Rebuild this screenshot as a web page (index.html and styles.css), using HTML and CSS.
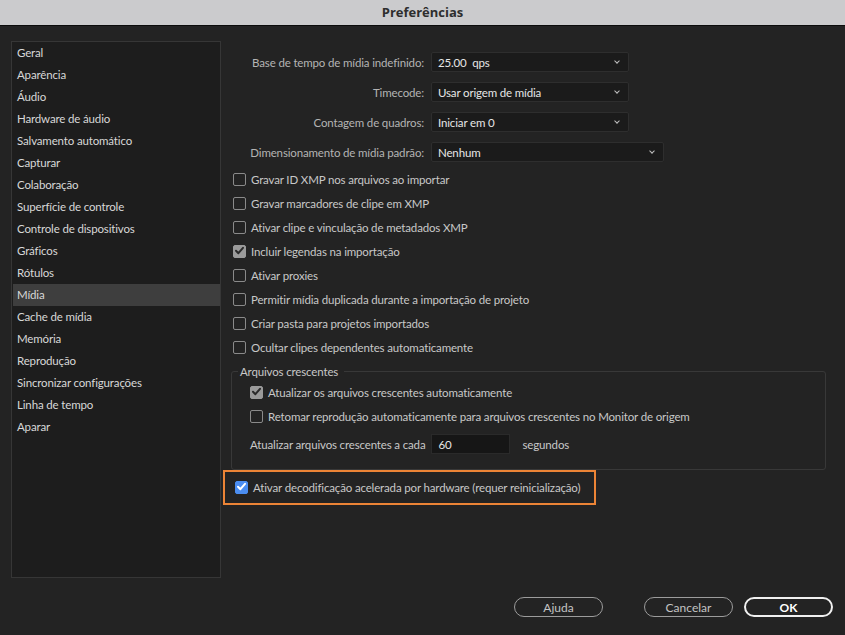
FILE: index.html
```html
<!DOCTYPE html>
<html lang="pt">
<head>
<meta charset="utf-8">
<title>Preferências</title>
<link rel="stylesheet" href="styles.css">
</head>
<body>
<div class="window">
  <div class="titlebar">Preferências</div>
  <div class="main">
    <ul class="sidebar">
      <li>Geral</li>
      <li>Aparência</li>
      <li>Áudio</li>
      <li>Hardware de áudio</li>
      <li>Salvamento automático</li>
      <li>Capturar</li>
      <li>Colaboração</li>
      <li>Superfície de controle</li>
      <li>Controle de dispositivos</li>
      <li>Gráficos</li>
      <li>Rótulos</li>
      <li class="selected">Mídia</li>
      <li>Cache de mídia</li>
      <li>Memória</li>
      <li>Reprodução</li>
      <li>Sincronizar configurações</li>
      <li>Linha de tempo</li>
      <li>Aparar</li>
    </ul>
    <div class="panel">
      <div class="form">
        <label class="flabel">Base de tempo de mídia indefinido:</label>
        <div class="select">25.00&nbsp; qps<span class="chev"></span></div>
        <label class="flabel">Timecode:</label>
        <div class="select">Usar origem de mídia<span class="chev"></span></div>
        <label class="flabel">Contagem de quadros:</label>
        <div class="select">Iniciar em 0<span class="chev"></span></div>
        <label class="flabel">Dimensionamento de mídia padrão:</label>
        <div class="select wide">Nenhum<span class="chev"></span></div>
      </div>
      <div class="checks">
        <div class="check"><span class="box"></span>Gravar ID XMP nos arquivos ao importar</div>
        <div class="check"><span class="box"></span>Gravar marcadores de clipe em XMP</div>
        <div class="check"><span class="box"></span>Ativar clipe e vinculação de metadados XMP</div>
        <div class="check"><span class="box on"><svg viewBox="0 0 13 13"><path d="M3 6.8 L5.4 9.2 L10 3.8" /></svg></span>Incluir legendas na importação</div>
        <div class="check"><span class="box"></span>Ativar proxies</div>
        <div class="check"><span class="box"></span>Permitir mídia duplicada durante a importação de projeto</div>
        <div class="check"><span class="box"></span>Criar pasta para projetos importados</div>
        <div class="check"><span class="box"></span>Ocultar clipes dependentes automaticamente</div>
      </div>
      <fieldset class="group">
        <legend>Arquivos crescentes</legend>
        <div class="check"><span class="box on"><svg viewBox="0 0 13 13"><path d="M3 6.8 L5.4 9.2 L10 3.8" /></svg></span>Atualizar os arquivos crescentes automaticamente</div>
        <div class="check"><span class="box"></span>Retomar reprodução automaticamente para arquivos crescentes no Monitor de origem</div>
        <div class="interval"><span>Atualizar arquivos crescentes a cada</span><span class="field">60</span><span class="unit">segundos</span></div>
      </fieldset>
      <div class="highlight">
        <div class="check"><span class="box blue"><svg viewBox="0 0 13 13"><path d="M3 6.8 L5.4 9.2 L10 3.8" /></svg></span>Ativar decodificação acelerada por hardware (requer reinicialização)</div>
      </div>
    </div>
  </div>
  <div class="footer">
    <button class="btn">Ajuda</button>
    <span class="spacer"></span>
    <button class="btn">Cancelar</button>
    <button class="btn primary">OK</button>
  </div>
</div>
</body>
</html>
```
FILE: styles.css
```css
* { box-sizing: border-box; }
html, body {
  margin: 0;
  padding: 0;
  background: #232323;
}
body {
  font-family: Lato, "Open Sans", sans-serif;
  font-size: 11.5px;
  letter-spacing: -0.15px;
  color: #c8c8c8;
}
.window {
  width: 845px;
  height: 635px;
  display: flex;
  flex-direction: column;
  background: #232323;
}
.titlebar {
  height: 26px;
  background: #cbcbcd;
  border-bottom: 1px solid #0c0c0c;
  text-align: center;
  font-family: "Open Sans", sans-serif;
  font-weight: 700;
  font-size: 13px;
  letter-spacing: 0;
  line-height: 25px;
  color: #2e2e2e;
}
.main {
  display: flex;
  padding: 15px 0 0 11px;
  height: 551px;
}
.sidebar {
  list-style: none;
  margin: 0;
  padding: 0 0 0 1px;
  width: 210px;
  height: 537px;
  border: 1px solid #363636;
  background: #1d1d1d;
  flex-shrink: 0;
}
.sidebar li {
  height: 22px;
  line-height: 22px;
  padding-left: 4px;
  color: #d8d8d8;
}
.sidebar li.selected {
  background: #3e3e3e;
}
.panel {
  margin-left: 10px;
  width: 595px;
  padding-top: 11px;
  display: flex;
  flex-direction: column;
}
.form {
  display: grid;
  grid-template-columns: 193px max-content;
  column-gap: 7px;
  row-gap: 10px;
  align-items: center;
}
.flabel {
  text-align: right;
  color: #b4b4b4;
}
.select {
  position: relative;
  width: 198px;
  height: 20px;
  line-height: 19px;
  padding-left: 6px;
  background: #1b1b1b;
  border: 1px solid #2e2e2e;
  border-radius: 2px;
  color: #e6e6e6;
}
.select.wide { width: 233px; }
.chev {
  position: absolute;
  right: 9px;
  top: 6px;
  width: 4px;
  height: 4px;
  border-right: 1px solid #c0c0c0;
  border-bottom: 1px solid #c0c0c0;
  transform: rotate(45deg);
}
.checks {
  margin-top: 5px;
  display: flex;
  flex-direction: column;
}
.check {
  display: flex;
  align-items: center;
  height: 24px;
  padding-left: 2px;
  color: #c8c8c8;
  white-space: nowrap;
}
.box {
  width: 13px;
  height: 13px;
  border: 1.5px solid #8a8a8a;
  border-radius: 2px;
  margin-right: 5px;
  flex-shrink: 0;
  display: flex;
}
.box svg { width: 100%; height: 100%; }
.box svg path {
  fill: none;
  stroke-width: 2;
  stroke-linecap: round;
  stroke-linejoin: round;
}
.box.on {
  background: #9a9a9a;
  border-color: #9a9a9a;
}
.box.on svg { margin: -1.5px; width: 13px; height: 13px; }
.box.on svg path { stroke: #2a2a2a; }
.box.blue {
  background: #4b8df0;
  border-color: #4b8df0;
}
.box.blue svg { margin: -1.5px; width: 13px; height: 13px; }
.box.blue svg path { stroke: #ffffff; }
.group {
  margin: 6px 0 0 0;
  padding: 2px 0 11px 16px;
  width: 595px;
  border: 1px solid #383838;
  border-radius: 3px;
  min-inline-size: 0;
}
.group legend {
  padding: 0 6px 0 2px;
  margin-left: -10px;
  color: #c8c8c8;
}
.interval {
  display: flex;
  align-items: center;
  height: 30px;
  padding-left: 2px;
  padding-top: 2px;
}
.field {
  width: 79px;
  height: 20px;
  line-height: 19px;
  margin-left: 6px;
  padding-left: 6px;
  background: #161616;
  border: 1px solid #2a2a2a;
  color: #e6e6e6;
}
.unit { margin-left: 12px; }
.highlight {
  margin: 0 0 0 -8px;
  width: 373px;
  height: 35px;
  border: 2px solid #ec8436;
  padding: 3px 0 0 8px;
}
.footer {
  margin-top: auto;
  height: 58px;
  display: flex;
  align-items: flex-start;
  padding: 20px 12px 0 514px;
}
.spacer { width: 41px; }
.btn {
  width: 89px;
  height: 20px;
  border-radius: 10px;
  border: 1.5px solid #9c9c9c;
  background: transparent;
  color: #c4c4c4;
  font-family: Lato, "Open Sans", sans-serif;
  font-size: 12px;
  padding: 0;
  line-height: 17px;
}
.btn.primary {
  margin-left: 11px;
  border: 2px solid #f0f0f0;
  color: #ffffff;
  font-weight: 700;
}
```
